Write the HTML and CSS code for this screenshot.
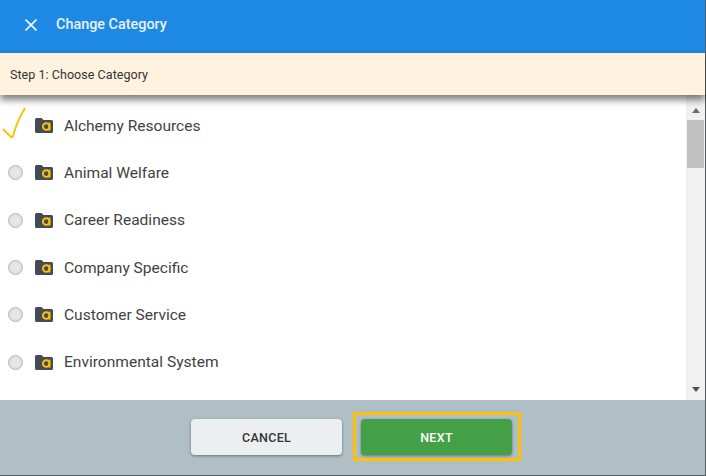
FILE: index.html
```html
<!DOCTYPE html>
<html lang="en">
<head>
    <meta charset="UTF-8">
    <meta name="viewport" content="width=device-width, initial-scale=1.0">
    <title>Change Category</title>
    <link rel="stylesheet" href="styles.css">
</head>
<body>

    <div class="dialog">
        <header class="title-bar">
            <svg class="close-icon" viewBox="0 0 12 12">
                <path d="M0.5 0.5 L11.5 11.5 M11.5 0.5 L0.5 11.5"/>
            </svg>
            <h1>Change Category</h1>
        </header>

        <div class="step-bar">Step 1: Choose Category</div>

        <div class="content">
            <ul class="category-list">
                <li>
                    <span class="marker">
                        <svg class="check-icon" viewBox="0 0 24 32">
                            <path d="M1 22 L9 30 Q10.5 30.5 11 29 Q15 14 23 1"/>
                        </svg>
                    </span>
                    <svg class="folder-icon" viewBox="0 0 18 15"><path class="folder" d="M0 1.5 Q0 0 1.5 0 H6.5 L8.5 2 H16.5 Q18 2 18 3.5 V13.5 Q18 15 16.5 15 H1.5 Q0 15 0 13.5 Z"/><circle class="logo-ring" cx="11.2" cy="8.6" r="3.3"/><path class="logo-stem" d="M14.5 4.6 V12.6"/></svg>
                    Alchemy Resources
                </li>
                <li>
                    <span class="marker"><span class="radio"></span></span>
                    <svg class="folder-icon" viewBox="0 0 18 15"><path class="folder" d="M0 1.5 Q0 0 1.5 0 H6.5 L8.5 2 H16.5 Q18 2 18 3.5 V13.5 Q18 15 16.5 15 H1.5 Q0 15 0 13.5 Z"/><circle class="logo-ring" cx="11.2" cy="8.6" r="3.3"/><path class="logo-stem" d="M14.5 4.6 V12.6"/></svg>
                    Animal Welfare
                </li>
                <li>
                    <span class="marker"><span class="radio"></span></span>
                    <svg class="folder-icon" viewBox="0 0 18 15"><path class="folder" d="M0 1.5 Q0 0 1.5 0 H6.5 L8.5 2 H16.5 Q18 2 18 3.5 V13.5 Q18 15 16.5 15 H1.5 Q0 15 0 13.5 Z"/><circle class="logo-ring" cx="11.2" cy="8.6" r="3.3"/><path class="logo-stem" d="M14.5 4.6 V12.6"/></svg>
                    Career Readiness
                </li>
                <li>
                    <span class="marker"><span class="radio"></span></span>
                    <svg class="folder-icon" viewBox="0 0 18 15"><path class="folder" d="M0 1.5 Q0 0 1.5 0 H6.5 L8.5 2 H16.5 Q18 2 18 3.5 V13.5 Q18 15 16.5 15 H1.5 Q0 15 0 13.5 Z"/><circle class="logo-ring" cx="11.2" cy="8.6" r="3.3"/><path class="logo-stem" d="M14.5 4.6 V12.6"/></svg>
                    Company Specific
                </li>
                <li>
                    <span class="marker"><span class="radio"></span></span>
                    <svg class="folder-icon" viewBox="0 0 18 15"><path class="folder" d="M0 1.5 Q0 0 1.5 0 H6.5 L8.5 2 H16.5 Q18 2 18 3.5 V13.5 Q18 15 16.5 15 H1.5 Q0 15 0 13.5 Z"/><circle class="logo-ring" cx="11.2" cy="8.6" r="3.3"/><path class="logo-stem" d="M14.5 4.6 V12.6"/></svg>
                    Customer Service
                </li>
                <li>
                    <span class="marker"><span class="radio"></span></span>
                    <svg class="folder-icon" viewBox="0 0 18 15"><path class="folder" d="M0 1.5 Q0 0 1.5 0 H6.5 L8.5 2 H16.5 Q18 2 18 3.5 V13.5 Q18 15 16.5 15 H1.5 Q0 15 0 13.5 Z"/><circle class="logo-ring" cx="11.2" cy="8.6" r="3.3"/><path class="logo-stem" d="M14.5 4.6 V12.6"/></svg>
                    Environmental System
                </li>
            </ul>

            <div class="scrollbar">
                <span class="arrow-up"></span>
                <div class="track"><div class="thumb"></div></div>
                <span class="arrow-down"></span>
            </div>
        </div>

        <footer class="actions">
            <button class="btn btn-cancel">CANCEL</button>
            <div class="highlight">
                <button class="btn btn-next">NEXT</button>
            </div>
        </footer>
    </div>

</body>
</html>
```

FILE: styles.css
```css
html, body {
    height: 100%;
    margin: 0;
}

body {
    font-family: Roboto, Arial, sans-serif;
    background: #ffffff;
    overflow: hidden;
}

.dialog {
    display: flex;
    flex-direction: column;
    height: 475px;
    width: 705px;
    border-right: 1px solid #555c60;
    border-bottom: 1px solid #555c60;
}

/* Blue title */
.title-bar {
    display: flex;
    align-items: center;
    box-sizing: border-box;
    height: 53px;
    padding: 0 0 4px 25px;
    background: #1e88e5;
    color: #e8f3fc;
}

.title-bar h1 {
    margin: 0 0 0 19px;
    font-size: 14.4px;
    font-weight: 500;
}

.close-icon {
    width: 12px;
    height: 12px;
}

.close-icon path {
    fill: none;
    stroke: #f2f8fd;
    stroke-width: 1.6;
}

.step-bar {
    position: relative;
    z-index: 1;
    height: 42px;
    line-height: 43px;
    padding-left: 10px;
    background: #fff3e0;
    color: #333333;
    font-size: 12.5px;
    letter-spacing: 0.05px;
    box-shadow: 0 5px 7px rgba(0, 0, 0, 0.5);
}

.content {
    display: flex;
    flex: 1;
    min-height: 0;
    overflow: hidden;
}

.category-list {
    flex: 1;
    list-style: none;
    margin: 0;
    padding: 7px 0 0;
}

.category-list li {
    display: flex;
    align-items: center;
    height: 47.3px;
    color: #424242;
    font-size: 15.55px;
}

.marker {
    display: flex;
    align-items: center;
    justify-content: center;
    width: 31px;
    height: 32px;
    margin-right: 4px;
}

.radio {
    width: 13px;
    height: 13px;
    border-radius: 50%;
    border: 1px solid #b8b8b8;
    background: radial-gradient(circle, #e6e6e6 40%, #d2d2d2 100%);
}

.check-icon {
    flex-shrink: 0;
    width: 24px;
    height: 32px;
    margin: 0 4px 6px 0;
}

.check-icon path {
    fill: none;
    stroke: #ffc107;
    stroke-width: 2;
}

.folder-icon {
    width: 18px;
    height: 15px;
    margin-right: 11px;
}

.folder {
    fill: #434c54;
}

.logo-ring {
    fill: none;
    stroke: #ffc107;
    stroke-width: 1.9;
}

.logo-stem {
    fill: none;
    stroke: #ffc107;
    stroke-width: 1.9;
}

/* Fake scrollbar, matches the look of the native one */
.scrollbar {
    display: flex;
    flex-direction: column;
    align-items: center;
    width: 19px;
    background: #f1f1f1;
}

.track {
    flex: 1;
    width: 100%;
    padding-top: 7px;
}

.thumb {
    height: 48px;
    margin: 0 1px;
    background: #c1c1c1;
}

.arrow-up, .arrow-down {
    width: 0;
    height: 0;
    border-left: 4.5px solid transparent;
    border-right: 4.5px solid transparent;
}

.arrow-up {
    margin-top: 13px;
    border-bottom: 5px solid #6b6b6b;
}

.arrow-down {
    margin-bottom: 8px;
    border-top: 5px solid #505050;
}

.actions {
    display: flex;
    align-items: flex-start;
    justify-content: center;
    gap: 11px;
    box-sizing: border-box;
    height: 75px;
    padding: 12px 0 0 7px;
    background: #b0bec5;
}

.btn {
    width: 151px;
    height: 36px;
    border: none;
    border-radius: 4px;
    font-family: inherit;
    font-size: 12.5px;
    font-weight: 500;
    letter-spacing: 0.3px;
    box-shadow: 0 1px 3px rgba(0, 0, 0, 0.4);
}

.btn-cancel {
    margin-top: 7px;
    background: #eceff1;
    color: #333333;
}

.btn-next {
    display: block;
    background: #43a047;
    color: #ffffff;
}

.highlight {
    padding: 4px 6px 3px 5px;
    border: 3px solid #ffc107;
}
```
